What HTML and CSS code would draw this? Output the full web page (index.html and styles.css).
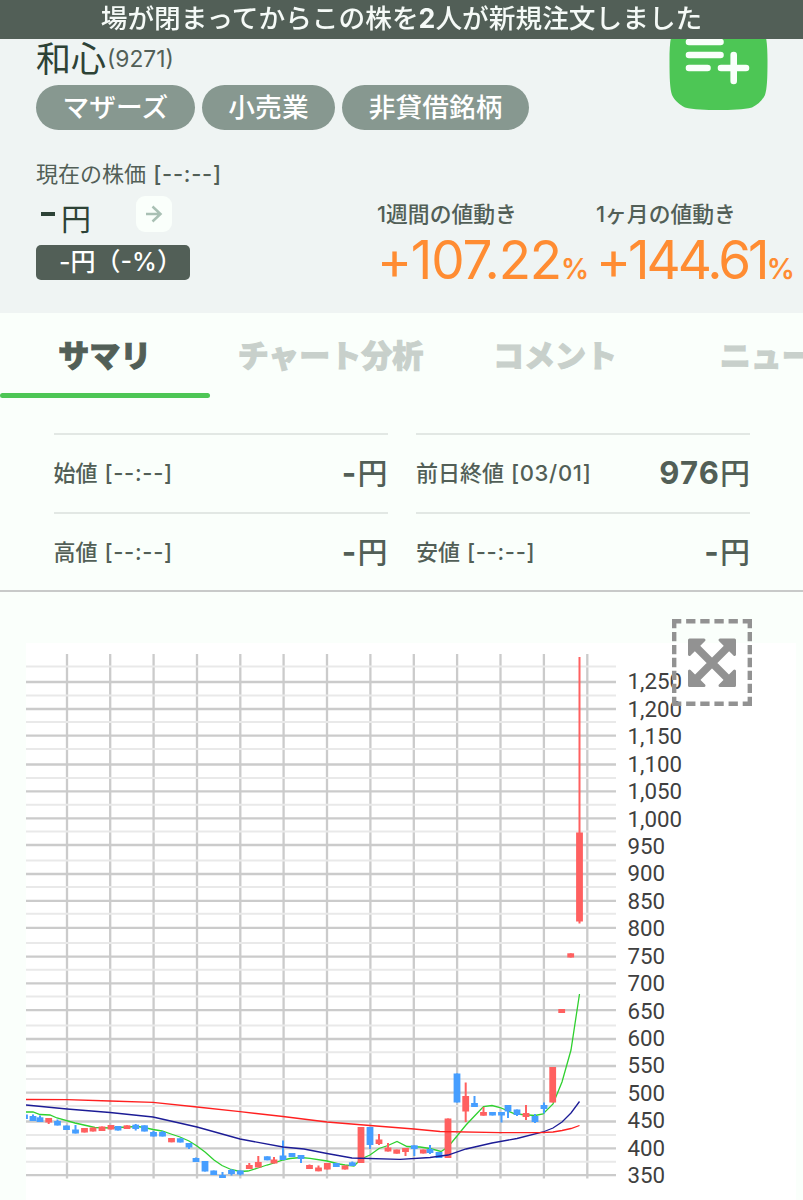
FILE: index.html
```html
<!DOCTYPE html>
<html lang="ja">
<head>
    <meta charset="utf-8" />
    <title>和心(9271)</title>
    <link rel="stylesheet" href="styles.css">
</head>
<body>
    <div class="notice">場が閉まってからこの株を<b>2</b>人が新規注文しました</div>
    <header class="stock">
        <div class="stock-top">
            <div>
                <h1 class="name">和心<span class="code">(9271)</span></h1>
                <div class="tags">
                    <span class="tag">マザーズ</span>
                    <span class="tag">小売業</span>
                    <span class="tag">非貸借銘柄</span>
                </div>
            </div>
            <svg class="add" width="99" height="99" viewBox="0 0 99 99">
                <path d="M49.5 0C79 0 84 2 91 12C97 20 98.500 30 98.500 49.5C98.500 68 98 78 96 84C93 90 88 94 83 96.500C75 98.500 62 99 49.5 99C37 99 24 98.500 16 96.500C11 94 6 90 3 84C1 78 .5 68 .5 49.5C.5 30 2 20 8 12C15 2 20 0 49.5 0Z" fill="#4dc655" />
                <path d="M20 31H51.500M20 44H51.500M20 57H38.500M52 57H77M64.700 44V70" stroke="#f9fffa" stroke-width="6.600" stroke-linecap="round" />
            </svg>
        </div>
        <div class="stock-price">
            <div class="now">
                <p class="label">現在の株価 <span class="time">[--:--]</span></p>
                <div class="price-row">
                    <span class="price"><i class="dash"></i>円</span>
                    <span class="arrow">
                        <svg width="20" height="20" viewBox="0 0 20 20" fill="none" stroke="#a9c0b4" stroke-width="2.500">
                            <path d="M2 10H17M8.500 2.500L16.500 10L8.500 17.500" />
                        </svg>
                    </span>
                </div>
                <div class="diff">-円（-%）</div>
            </div>
            <div class="move week">
                <p class="label">1週間の値動き</p>
                <p class="rate"><span class="num">+107.22</span><small>%</small></p>
            </div>
            <div class="move month">
                <p class="label">1ヶ月の値動き</p>
                <p class="rate"><span class="num">+144.61</span><small>%</small></p>
            </div>
        </div>
    </header>

    <nav class="tabs">
        <a class="tab tab-summary active">サマリ</a>
        <a class="tab tab-chart">チャート分析</a>
        <a class="tab tab-comment">コメント</a>
        <a class="tab tab-news">ニュース</a>
    </nav>

    <div class="prices">
        <div class="item"><span class="key">始値 <span class="time">[--:--]</span></span><span class="val"><b>-</b>円</span></div>
        <div class="item"><span class="key">前日終値 <span class="time">[03/01]</span></span><span class="val"><b>976</b>円</span></div>
        <div class="item"><span class="key">高値 <span class="time">[--:--]</span></span><span class="val"><b>-</b>円</span></div>
        <div class="item"><span class="key">安値 <span class="time">[--:--]</span></span><span class="val"><b>-</b>円</span></div>
    </div>

    <div class="chart-box">
        <svg id="chart" class="chart" width="770" height="557" viewBox="26 643 770 557"></svg>
        <svg class="expand" width="80" height="87" viewBox="0 0 80 87">
            <g stroke="#929292" stroke-width="4.400">
                <path d="M0 2.200H80M0 84.800H80" stroke-dasharray="9.300 4.840" />
                <path d="M2.200 0V87M77.800 0V87" stroke-dasharray="9.300 3.650" />
            </g>
            <path d="M22 26L58 62M58 26L22 62" stroke="#929292" stroke-width="7.500" />
            <path d="M17.500 21H32L17.500 35.500ZM62.500 21H48L62.500 35.500ZM17.500 66.500H32L17.500 52ZM62.500 66.500H48L62.500 52Z" fill="#929292" stroke="#929292" stroke-width="3" stroke-linejoin="round" />
        </svg>
    </div>
    <script src="chart.js"></script>
</body>
</html>
```

FILE: styles.css
```css
*{
    box-sizing:border-box;
}
body{
    margin:0;
    width:803px;
    height:1200px;
    overflow:hidden;
    background-color:#fafffb;
    color:#525f57;
    font-family:Inter, "Noto Sans CJK JP", sans-serif;
}
h1,p{
    margin:0;
    font-weight:normal;
}
.notice{
    position:fixed;
    top:0;
    left:0;
    z-index:2;
    width:100%;
    height:39px;
    background-color:#525f57;
    color:#f5faf7;
    font:500 26.7px/34px "Noto Sans CJK JP", sans-serif;
    text-align:center;
    white-space:nowrap;
}
.notice b{
    font-family:Inter, sans-serif;
}
.stock{
    height:313px;
    padding:11px 0 0 36px;
    background-color:#eff4f3;
}
.stock-top{
    display:flex;
    justify-content:space-between;
    height:148px;
    padding-right:35px;
}
.name{
    display:flex;
    align-items:center;
    height:40px;
    margin-top:28px;
    color:#2d4236;
    font-size:35px;
    line-height:40px;
}
.name .code{
    margin-left:1px;
    color:#525f57;
    font-size:22.8px;
}
.tags{
    display:flex;
    gap:7px;
    margin-top:6px;
}
.tag{
    height:45px;
    padding:0 26.500px;
    border-radius:23px;
    background-color:#879890;
    color:#fff;
    font:500 26.7px/42px "Noto Sans CJK JP", sans-serif;
    letter-spacing:.1px;
}
.stock-price{
    display:flex;
}
.label{
    font-size:22px;
    line-height:30px;
    white-space:nowrap;
}
.time{
    margin-left:1px;
    font-weight:500;
    letter-spacing:.7px;
}
.now{
    flex:none;
    width:341px;
}
.price-row{
    display:flex;
    height:56px;
    padding-top:7px;
}
.price{
    display:flex;
    width:100px;
    padding-left:5px;
    color:#2d4236;
    font-size:30px;
    line-height:46px;
}
.dash{
    width:14px;
    height:4px;
    margin:16px 6px 0 0;
    background-color:#2d4236;
}
.arrow{
    display:flex;
    align-items:center;
    justify-content:center;
    width:36px;
    height:36px;
    border-radius:9px;
    background-color:#fafffb;
}
.diff{
    width:154px;
    height:35px;
    border-radius:5px;
    background-color:#525f57;
    color:#fff;
    font:500 25px/35px Inter, "Noto Sans CJK JP", sans-serif;
    padding-left:23px;
    white-space:nowrap;
}
.move{
    flex:none;
    width:219px;
    padding-top:40px;
}
.move .label{
    font-size:21.8px;
    font-weight:500;
}
.rate{
    display:flex;
    align-items:baseline;
    color:#ff8c32;
    line-height:63px;
}
.num{
    font-size:53px;
}
.week .num{
    letter-spacing:-1.2px;
}
.month .num{
    letter-spacing:-3px;
}
.rate small{
    font-size:28px;
    font-weight:600;
}
.tabs{
    display:flex;
    height:85px;
    overflow:hidden;
}
.tab{
    flex:none;
    height:85px;
    color:#c8d0cb;
    font:900 31px/82px "Noto Sans CJK JP", sans-serif;
    text-align:center;
    -webkit-text-stroke:1px;
}
.tab-summary{
    width:209.500px;
}
.tab-chart{
    width:242px;
}
.tab-comment{
    width:207px;
}
.tab-news{
    width:245px;
}
.tab.active{
    color:#525f57;
}
.tab.active::after{
    content:"";
    display:block;
    height:5px;
    margin-top:-2px;
    border-radius:3px;
    background-color:#4dc655;
}
.prices{
    display:grid;
    grid-template-columns:334px 334px;
    grid-auto-rows:78.5px;
    column-gap:28.500px;
    height:194px;
    padding:35px 0 0 53.500px;
    border-bottom:2px solid #c8cac9;
}
.item{
    display:flex;
    align-items:center;
    justify-content:space-between;
    padding-bottom:4px;
    border-top:2px solid #e2e8e4;
}
.key{
    font-size:22px;
    font-weight:500;
}
.val{
    font-size:30px;
    font-weight:500;
}
.val b{
    font-size:31px;
    letter-spacing:1.2px;
}
.chart-box{
    position:relative;
    margin:51px 0 0 26px;
    width:770px;
    height:557px;
    background-color:#fff;
}
.chart{
    display:block;
}
.expand{
    position:absolute;
    left:646px;
    top:-24px;
}
.major,.month-line{
    stroke:#cbcbcb;
    stroke-width:2.3;
}
.minor{
    stroke:#e9e9e9;
    stroke-width:2;
}
.axis{
    fill:#404040;
    font:22.3px Roboto, sans-serif;
}
.up{
    fill:#ff6060;
}
.down{
    fill:#469eff;
}
.avg{
    fill:none;
    stroke-width:1.3;
}
.avg-short{
    stroke:#2fd02f;
}
.avg-mid{
    stroke:#1c1c96;
}
.avg-long{
    stroke:#ff2020;
}
```

FILE: chart.js
```js
var months = [67, 110.2, 153.6, 197, 240.3, 283.6, 327, 370.4, 413.8, 457.1, 500.5, 543.9, 587.3];
var majors = [682, 709, 735.7, 764.5, 791.4, 818.3, 845, 874, 900.8, 927.8, 956.6, 983.4, 1010.2, 1039, 1066, 1092.7, 1121.5, 1148.3, 1175.2];
var minors = [666.5, 695.5, 722, 749, 778, 804.7, 831.5, 860.5, 887, 913.7, 943, 969.7, 996.5, 1025.5, 1052.3, 1079, 1106, 1135, 1161.7];

// x, body top, body bottom, wick top, wick bottom, up = 1
var candles = [
    [24.5, 1114.5, 1119, 1114.5, 1119, 0],
    [33, 1116, 1121, 1114.5, 1121, 0],
    [40, 1117.3, 1122, 1115.5, 1122, 0],
    [48.7, 1118, 1122.5, 1118, 1124, 1],
    [57.5, 1121, 1125.5, 1119.5, 1125.5, 0],
    [66.5, 1125.5, 1130, 1125.5, 1130, 0],
    [75.5, 1129.5, 1133.5, 1125, 1133.5, 0],
    [84.5, 1128, 1132.5, 1128, 1132.5, 1],
    [93, 1127.5, 1131.5, 1127.5, 1131.5, 1],
    [102, 1126.5, 1131, 1126.5, 1131, 1],
    [111, 1125, 1129.5, 1125, 1129.5, 1],
    [118, 1126, 1130.5, 1126, 1130.5, 0],
    [127, 1125.3, 1129, 1125.3, 1129, 1],
    [135.7, 1124.7, 1129, 1124, 1130.5, 0],
    [144.5, 1125.3, 1131.5, 1125.3, 1131.5, 0],
    [153.5, 1132, 1136.5, 1131, 1136.5, 0],
    [162.5, 1132, 1136.5, 1131, 1136.5, 0],
    [171.5, 1138, 1142.3, 1138, 1142.3, 1],
    [180.3, 1138.3, 1142.5, 1138.3, 1142.5, 0],
    [189, 1143, 1147.5, 1143, 1149, 0],
    [196, 1158, 1162, 1157.5, 1162, 0],
    [205, 1161, 1171.5, 1161, 1171.5, 0],
    [213.7, 1170.5, 1175, 1170.5, 1175, 0],
    [222.5, 1175, 1178, 1172, 1178, 0],
    [231.5, 1170, 1174, 1169, 1175.5, 0],
    [240.3, 1170.5, 1174.5, 1170.5, 1175.5, 0],
    [249.3, 1165, 1169, 1163, 1169, 1],
    [258.3, 1162, 1167.5, 1156, 1167.5, 1],
    [267.3, 1156.3, 1160.3, 1156.3, 1160.3, 0],
    [274, 1159.5, 1163.5, 1157, 1163.5, 1],
    [283, 1155.5, 1160, 1140.5, 1160, 0],
    [292, 1153, 1157, 1153, 1157, 0],
    [301, 1155, 1159, 1155, 1163, 0],
    [309.5, 1165, 1169, 1164.5, 1169, 1],
    [318.5, 1167.5, 1171.3, 1165.5, 1171.3, 1],
    [327.3, 1163, 1169.5, 1163, 1169.5, 1],
    [336.3, 1163, 1167, 1163, 1167, 0],
    [345, 1165.5, 1169.5, 1165.5, 1169.5, 1],
    [352.3, 1162.3, 1166, 1161.5, 1166, 0],
    [361, 1127, 1163, 1127, 1163, 1],
    [370, 1127, 1145, 1127, 1149, 0],
    [379, 1139.5, 1144, 1134, 1145, 1],
    [388, 1147.5, 1151.5, 1143, 1151.5, 1],
    [396.7, 1149.5, 1153.7, 1149.5, 1153.7, 1],
    [405.5, 1148, 1152, 1148, 1156, 1],
    [414.3, 1145.3, 1149, 1145.3, 1156, 0],
    [423.3, 1149.5, 1153.5, 1149.5, 1153.5, 1],
    [430, 1149, 1153, 1145, 1154, 0],
    [439, 1152, 1158, 1152, 1158, 0],
    [448, 1118.5, 1158, 1118.5, 1158, 1],
    [457, 1073.5, 1102.5, 1073.5, 1102.5, 0],
    [465.7, 1096, 1111.5, 1082.5, 1122, 1],
    [474.5, 1103, 1107, 1096, 1107, 0],
    [483.5, 1112, 1115.7, 1107, 1115.7, 1],
    [492.5, 1112, 1115.5, 1112, 1115.5, 0],
    [501.5, 1112, 1115.5, 1112, 1122.5, 0],
    [508, 1105, 1111.5, 1105, 1118, 0],
    [517, 1109.5, 1115, 1109.5, 1116, 0],
    [526, 1113, 1117, 1105, 1120, 1],
    [535, 1116, 1122, 1114, 1123, 0],
    [544, 1105, 1109, 1102.5, 1113.5, 0],
    [552.7, 1067, 1102.5, 1067, 1102.5, 1],
    [561.7, 1009, 1013, 1009, 1013, 1],
    [570.7, 953.3, 957.5, 953.3, 957.5, 1],
    [579.5, 832.5, 921.5, 657, 923.5, 1]
];

// moving averages
var avgShort = "26,1112 33,1112 40,1114.5 50,1115 57,1118 75,1123 95,1127.5 111,1128 127,1127 138,1126.5 144,1127.5 153,1129.5 162,1131 171,1134 180,1137 189,1141 197,1146 205,1152 214,1160 222,1165.500 231,1169.500 240,1171.500 248,1171 258,1168 267,1165 274,1163 283,1160 290,1158.500 301,1157.500 310,1158.300 327,1161 339,1164 345,1165 354,1166 361,1159 370,1155 379,1148.500 388,1145.500 397,1141.500 407,1146.500 420,1147 430,1148.500 441,1151.500 448,1147 457,1136 466,1125 475,1115.500 483.500,1106.500 492,1105.500 500,1107.500 514,1113.500 522,1114.500 535,1115.500 543,1114 553,1104 562,1082 571,1050 579.500,994";
var avgMid = "26,1105 67,1109 110,1112.500 153,1117 197,1127 240,1139 283,1147 304,1149 327,1153.500 352,1158 400,1159.300 430,1157.500 448,1155 466,1149 492,1143 517,1138.500 543,1132 553,1128 562,1122 571,1113 579.500,1101.500";
var avgLong = "26,1099.500 67,1099.700 110,1101 153,1102.300 197,1107 240,1111.700 283,1116.500 327,1122 370,1125.500 414,1129 440,1131.500 500,1132.700 540,1132.700 553,1132 562,1130.500 571,1128.500 579.500,1125.500";

var out = "";
months.forEach(function (x) {
    out += '<line class="month-line" x1="' + x + '" x2="' + x + '" y1="654" y2="1178.500" />';
});
minors.forEach(function (y) {
    out += '<line class="minor" x1="26" x2="616" y1="' + y + '" y2="' + y + '" />';
});
majors.forEach(function (y) {
    out += '<line class="major" x1="26" x2="616" y1="' + y + '" y2="' + y + '" />';
});
out += '<polyline class="avg avg-short" points="' + avgShort + '" />';
candles.forEach(function (c) {
    var cls = c[5] ? "up" : "down";
    out += '<rect class="' + cls + '" x="' + (c[0] - 1) + '" y="' + c[3] + '" width="2" height="' + (c[4] - c[3]) + '" />';
    out += '<rect class="' + cls + '" x="' + (c[0] - 3.4) + '" y="' + c[1] + '" width="6.800" height="' + (c[2] - c[1]) + '" />';
});
out += '<polyline class="avg avg-mid" points="' + avgMid + '" />';
out += '<polyline class="avg avg-long" points="' + avgLong + '" />';
for (var i = 0; i < 19; i++) {
    out += '<text class="axis" x="627.500" y="' + (689.3 + i * 27.44) + '">' + (1250 - i * 50).toLocaleString("en-US") + '</text>';
}
document.getElementById("chart").innerHTML = out;
```
